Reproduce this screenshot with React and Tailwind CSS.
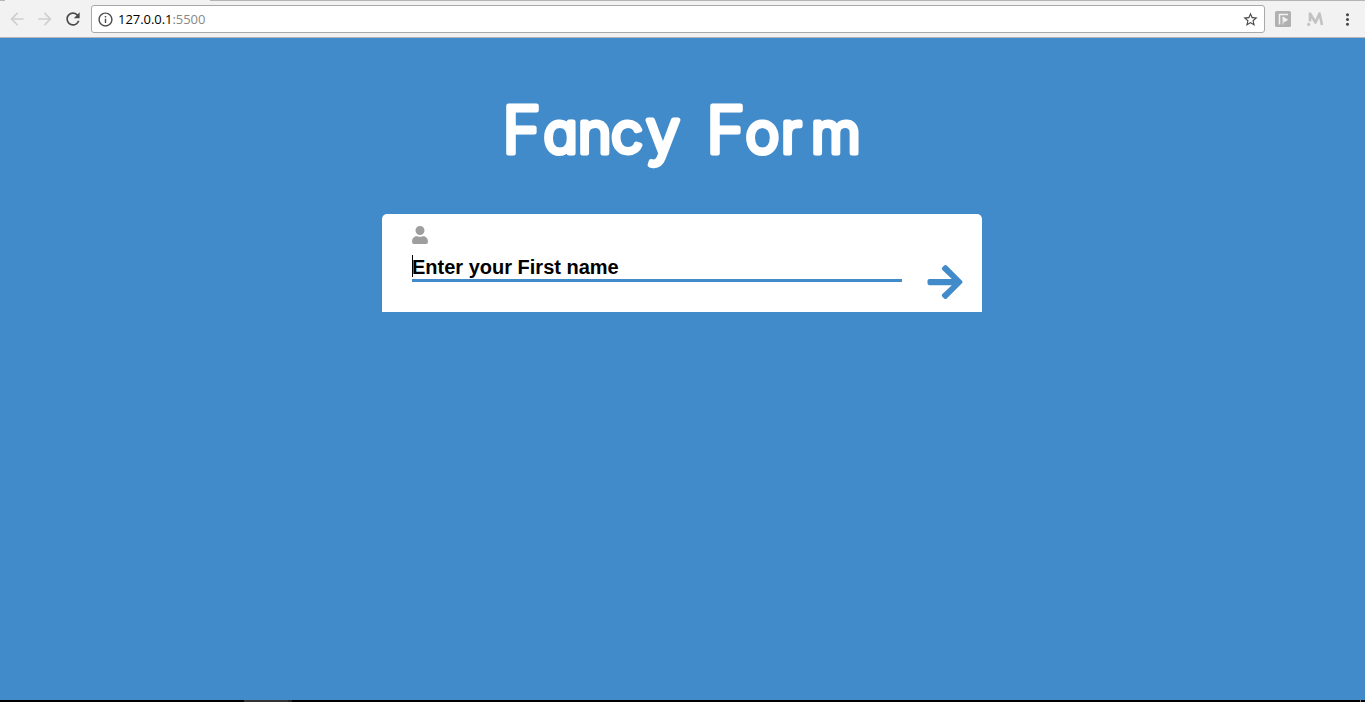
import { FaUser, FaArrowRight } from "react-icons/fa";
import { MdArrowBack, MdArrowForward, MdRefresh, MdInfoOutline, MdStarBorder, MdMoreVert } from "react-icons/md";

function Toolbar() {
  return (
    <header className="flex h-[38px] shrink-0 flex-col border-b border-[#b6b4b6] bg-[#f2f2f2]">
      <div className="flex h-px shrink-0">
        <div className="h-px w-[5px] bg-[#b4b4b4]" />
        <div className="h-px w-[205px] bg-[#f2f2f2]" />
        <div className="h-px flex-1 bg-[#b4b4b4]" />
      </div>
      <div className="flex h-9 items-center pl-[7px]">
        <MdArrowBack className="size-5 text-[#d0d0d0]" />
        <MdArrowForward className="ml-2 size-5 text-[#d0d0d0]" />
        <MdRefresh className="ml-[8px] size-5 text-[#4a4a4a]" />
        <div className="ml-[8px] flex h-7 w-[1174px] items-center rounded-[3px] border border-[#a9a9a9] bg-white pr-[5px] pl-[5px]">
          <MdInfoOutline className="size-[17px] text-[#4a4a4a]" />
          <span className="ml-[4px] flex-1 font-['Open_Sans',sans-serif] text-[13px] leading-[18px] tracking-[-0.05px] text-[#888]">
            <span className="text-black">127.0.0.1</span>:5500
          </span>
          <MdStarBorder className="size-[17px] text-[#4a4a4a]" />
        </div>
        <svg viewBox="0 0 16 16" className="ml-2.5 size-4">
          <rect width="16" height="16" rx="1.5" fill="#b0b0b0" />
          <path d="M4.5 13.5V3.5h8.5" fill="none" stroke="#f2f2f2" strokeWidth="1.6" />
          <path d="M8 6v7.5M8 6l4.5 2.8L9 11z" fill="#f2f2f2" stroke="#f2f2f2" strokeWidth="0.9" />
        </svg>
        <svg viewBox="0 0 18 16" className="ml-[15px] h-4 w-[18px]">
          <path d="M4 10.5V2.5L9.5 11.5 13.5 2.5 16 14" fill="none" stroke="#c2c2c2" strokeWidth="2.6" strokeLinejoin="round" />
          <circle cx="2.7" cy="13.4" r="1.6" fill="#c2c2c2" />
        </svg>
        <MdMoreVert className="ml-[14px] size-[19px] text-[#4a4a4a]" />
      </div>
    </header>
  );
}

function Title() {
  return (
    <h1 className="ml-[490px] h-[90px] w-[390px]">
      <svg
        viewBox="490 86 390 90"
        className="block h-[90px] w-[390px] fill-white stroke-white stroke-5 font-['Comic_Sans_MS',Inter,sans-serif] text-[57px] font-light [font-feature-settings:'cv11'] [stroke-linecap:round] [stroke-linejoin:round]"
      >
        <text y="152.5">
          <tspan x="502.5" className="text-[65px]">F</tspan>
          <tspan x="543.5 578 611">anc</tspan>
          <tspan x="646" className="text-[61px]">y</tspan>
          <tspan className="text-[65px]" x="693 706.5"> F</tspan>
          <tspan x="745.5 781 811">orm</tspan>
        </text>
      </svg>
    </h1>
  );
}

export default function App() {
  return (
    <div className="flex h-[702px] w-[1365px] flex-col overflow-hidden bg-[#428bca]">
      <Toolbar />
      <main className="flex flex-1 flex-col pt-[48px]">
        <Title />
        <form className="mt-[38px] ml-[382px] flex h-[98px] w-[600px] rounded-t-[5px] bg-white pl-[30px]" onSubmit={(e) => e.preventDefault()}>
          <div className="w-[490px] pt-3">
            <FaUser className="h-[18px] w-4 text-[#9e9e9e]" />
            <div className="mt-[10px] flex h-[28px] items-start border-b-3 border-[#428bca]">
              <span className="mt-px h-[22px] w-px bg-black" />
              <label className="-ml-px font-['Liberation_Sans',Arial,sans-serif] text-[20px] leading-[26px] font-bold text-black">Enter your First name</label>
            </div>
          </div>
          <button aria-label="Next" className="mt-[48px] ml-[24.5px] size-10 text-[#428bca]">
            <FaArrowRight className="h-10 w-[36px]" />
          </button>
        </form>
      </main>
      <footer className="flex h-0.5 shrink-0 bg-black">
        <div className="ml-[244px] h-0.5 w-11 bg-[#333]" />
        <div className="h-0.5 w-1 bg-[#222]" />
        <div className="ml-[1068px] h-0.5 w-px bg-[#777]" />
      </footer>
    </div>
  );
}
